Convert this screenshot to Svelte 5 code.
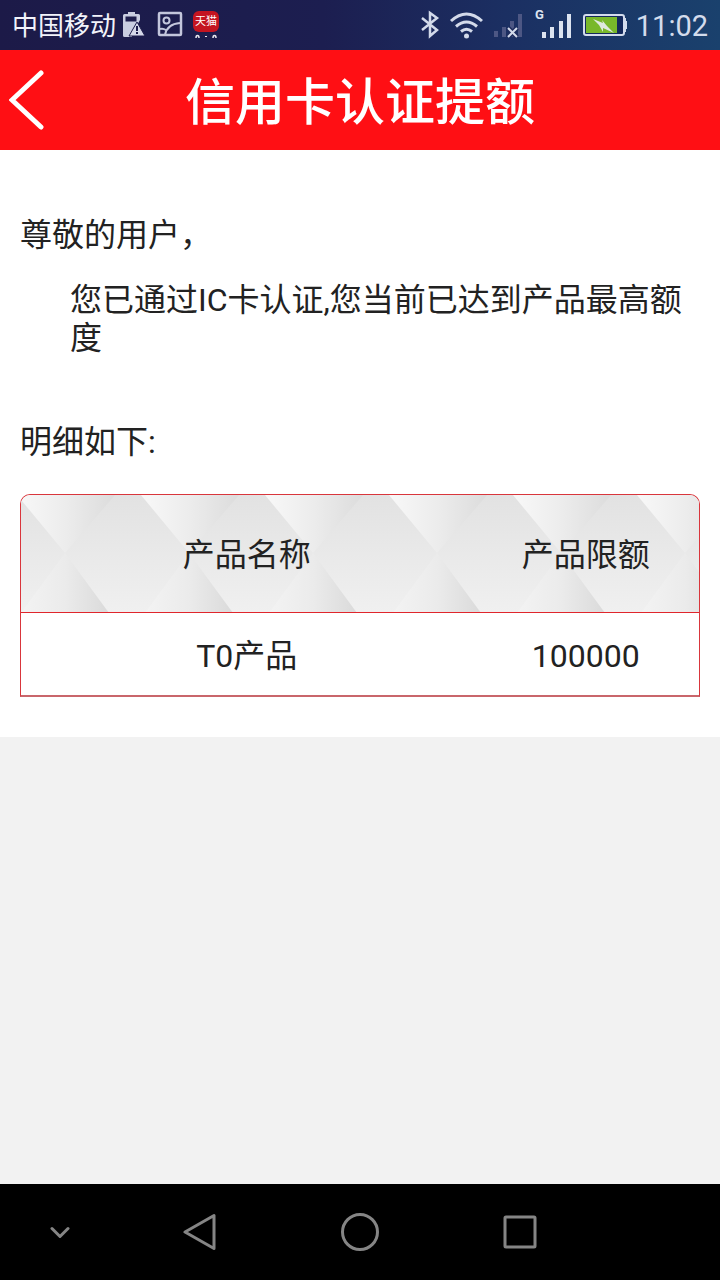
<script>
  let carrier = "中国移动";
  let time = "11:02";

  // Credit products and the limit for each one
  let products = [{ name: "T0产品", limit: "100000" }];

  const goBack = () => {
    history.back();
  };
</script>

<div class="page">
  <!-- Status Bar -->
  <div class="status-bar">
    <div class="status-group left">
      <span class="carrier">{carrier}</span>
      <svg width="24" height="28" viewBox="0 0 24 28">
        <path d="M6 1h7v2h3.500q1.500 0 1.500 1.500V9l-8 14v3H2.500Q1 26 1 24.500v-20Q1 3 2.500 3H6z" fill="#c9cde0" />
        <path d="M3.500 5.500h11v5h-11z" fill="#1e1d4c" />
        <path d="M15 11l8 14H7z" fill="#d5d8e8" stroke="#1e1d4c" stroke-width="1" />
        <path d="M14 15h2v5h-2zM14 21h2v2h-2z" fill="#1e1d4c" />
      </svg>
      <svg width="34" height="28" viewBox="0 0 34 28" fill="none" stroke="#c3c6dc" stroke-width="2">
        <rect x="7" y="2" width="22" height="22" rx="1" stroke-width="2.500" />
        <circle cx="14.500" cy="9.500" r="3" />
        <path d="M8 18q3-1 6 1M13 24q2-11 15-12" />
      </svg>
      <svg width="28" height="28" viewBox="0 0 28 28">
        <rect x="1" y="0" width="26" height="21" rx="6" fill="#c41420" />
        <text x="14" y="14" text-anchor="middle" class="shop">天猫</text>
        <path d="M4 27q0-2.500 1.500-2.500T7 27M21 27q0-2.500 1.500-2.500T24 27" fill="none" stroke="#e8e8ee" stroke-width="1.500" />
        <path d="M13 25h2v1h-2z" fill="#e8e8ee" />
      </svg>
    </div>

    <div class="status-group right">
      <svg width="24" height="30" viewBox="0 0 24 30" fill="none" stroke="#d3daea" stroke-width="2.500">
        <path d="M3 8l15 12-7 6V3l7 5L3 20" />
      </svg>
      <svg width="37" height="30" viewBox="0 0 37 30" fill="none" stroke="#d3daea" stroke-width="3">
        <path d="M2 11q15.500-14 31 0M7 16.500q10.500-9 21 0M12 21.500q5.500-4.500 11 0" />
        <circle cx="17.500" cy="26" r="2.500" fill="#d3daea" stroke="none" />
      </svg>
      <svg width="36" height="30" viewBox="0 0 36 30">
        <path d="M2 21h4v6H2zM10 17h4v10h-4zM18 11h4v16h-4zM26 4h4v23h-4z" fill="#4d5784" />
        <path d="M16 18l9 9M25 18l-9 9" stroke="#1f2c5d" stroke-width="5" />
        <path d="M16 18l9 9M25 18l-9 9" stroke="#d3daea" stroke-width="2" />
      </svg>
      <svg width="42" height="40" viewBox="0 -5 42 40">
        <text x="1" y="9" class="network">G</text>
        <path d="M8 22h4v6H8zM16 17h4v11h-4zM25 11h4v17h-4zM33 4h4v24h-4z" fill="#dce3f0" />
      </svg>
      <svg width="48" height="30" viewBox="0 0 48 30">
        <rect x="2" y="5" width="40" height="20" rx="2" fill="#14295c" stroke="#d3dced" stroke-width="2" />
        <path d="M42 8h2v3h1v8h-1v3h-2" fill="#d3dced" />
        <rect x="4" y="7" width="31" height="16" fill="#78b82a" />
        <path d="M11 9l10 4-1-3 5 6 7 7-11-5v4l-4-7z" fill="#dfe9df" />
      </svg>
      <span class="time">{time}</span>
    </div>
  </div>

  <!-- Title Bar -->
  <header class="header">
    <button class="back" aria-label="返回" on:click={goBack}>
      <svg width="36" height="60" viewBox="0 0 36 60">
        <path d="M32 3L3 30l29 27" fill="none" stroke="#fff" stroke-width="5" stroke-linecap="round" />
      </svg>
    </button>
    <h1>信用卡认证提额</h1>
  </header>

  <!-- Notice and Limits -->
  <main class="content">
    <p class="greeting">尊敬的用户，</p>
    <p class="message">您已通过IC卡认证,您当前已达到产品最高额度</p>
    <p class="detail">明细如下:</p>

    <div class="limits">
      <svg class="facets" width="100%" height="100%" aria-hidden="true">
        <defs>
          <linearGradient id="plain" x1="0" y1="0" x2="0" y2="1">
            <stop offset="0" stop-color="#e2e2e2" />
            <stop offset="1" stop-color="#f0f0f0" />
          </linearGradient>
          <linearGradient id="fold" x1="0" y1="0" x2="1" y2="0">
            <stop offset="0" stop-color="#f8f8f8" />
            <stop offset="0.500" stop-color="#ececec" />
            <stop offset="1" stop-color="#dcdcdc" />
          </linearGradient>
          <linearGradient id="fold-low" x1="0" y1="0" x2="1" y2="0">
            <stop offset="0" stop-color="#f3f3f3" />
            <stop offset="0.500" stop-color="#ebebeb" />
            <stop offset="1" stop-color="#dadada" />
          </linearGradient>
          <pattern id="facet" x="-18" width="124" height="118" patternUnits="userSpaceOnUse">
            <rect width="124" height="118" fill="url(#plain)" />
            <path d="M14 0h98L62 58z" fill="url(#fold)" />
            <path d="M62 58l44 60H18z" fill="url(#fold-low)" />
          </pattern>
        </defs>
        <rect width="100%" height="100%" fill="url(#facet)" />
      </svg>
      <table>
        <thead>
          <tr>
            <th class="name">产品名称</th>
            <th>产品限额</th>
          </tr>
        </thead>
        <tbody>
          {#each products as product}
            <tr>
              <td>{product.name}</td>
              <td>{product.limit}</td>
            </tr>
          {/each}
        </tbody>
      </table>
    </div>
  </main>

  <!-- Navigation Keys -->
  <nav class="keys">
    <button aria-label="隐藏">
      <svg width="20" height="14" viewBox="0 0 20 14"><path d="M2 3.500l8 8 8-8" /></svg>
    </button>
    <button aria-label="后退" on:click={goBack}>
      <svg width="34" height="38" viewBox="0 0 34 38"><path d="M31 2.500v33L2 19z" /></svg>
    </button>
    <button aria-label="主屏幕">
      <svg width="40" height="40" viewBox="0 0 40 40"><circle cx="20" cy="20" r="17.500" /></svg>
    </button>
    <button aria-label="最近任务">
      <svg width="36" height="36" viewBox="0 0 36 36"><rect x="3" y="3" width="30" height="30" rx="1" /></svg>
    </button>
  </nav>
</div>

<style>
  :global(body) {
    margin: 0;
    background: #f2f2f2;
  }

  .page {
    display: flex;
    flex-direction: column;
    min-height: 100vh;
    font-family: Roboto, "Noto Sans CJK SC", sans-serif;
    color: #222;
  }

  svg {
    display: block;
    flex-shrink: 0;
  }

  .status-bar {
    display: flex;
    justify-content: space-between;
    height: 50px;
    padding: 0 12px;
    background: linear-gradient(90deg, #1c1a48 0%, #1c1e50 45%, #1b2f62 70%, #1a416d 100%);
  }

  .status-group {
    display: flex;
    align-items: center;
    gap: 6px;
  }

  .carrier,
  .time {
    padding-top: 3px;
    line-height: 47px;
  }

  .carrier {
    font-size: 26px;
    color: #f2f3fa;
  }

  .shop {
    font-size: 11px;
    fill: #fff;
  }

  .network {
    font-size: 13px;
    font-weight: bold;
    fill: #dce3f0;
  }

  .time {
    font-size: 29px;
    color: #d3dcec;
  }

  .header {
    display: grid;
    grid-template-columns: 60px 1fr 60px;
    align-items: center;
    height: 100px;
    background: #ff0f14;
    color: #fff;
  }

  .header h1 {
    margin: 0;
    padding-top: 6px;
    font-size: 50px;
    line-height: 94px;
    font-weight: 500;
    text-align: center;
  }

  button {
    padding: 0;
    border: none;
    background: none;
    cursor: pointer;
  }

  .back {
    height: 100px;
    padding-left: 9px;
  }

  .content {
    padding: 66px 20px 40px;
    background: #fff;
    font-size: 32px;
    line-height: 38px;
  }

  .content p {
    margin: 0;
  }

  .content .message {
    margin-top: 27px;
    padding-left: 50px;
  }

  .content .detail {
    margin-top: 66px;
  }

  .limits {
    position: relative;
    margin-top: 33px;
    border: 1px solid #d9363c;
    border-bottom: 2px solid #c9666b;
    border-radius: 10px 10px 0 0;
    overflow: hidden;
  }

  /* patterned backdrop under the heading row */
  .facets {
    position: absolute;
    inset: 0;
  }

  table {
    position: relative;
    width: 100%;
    border-collapse: collapse;
    table-layout: fixed;
  }

  th,
  td {
    padding: 2px 0 0;
    font-weight: 400;
    text-align: center;
  }

  th {
    height: 115px;
  }

  .name {
    width: 66.6%;
  }

  td {
    height: 79px;
    padding-top: 3px;
    border-top: 1px solid #e0262c;
    background: #fff;
  }

  .keys {
    display: grid;
    grid-template-columns: 3fr 4fr 4fr 4fr 3fr;
    height: 96px;
    margin-top: auto;
    background: #000;
  }

  .keys button {
    display: flex;
    align-items: center;
    justify-content: center;
  }

  .keys svg {
    fill: none;
    stroke: #858585;
    stroke-width: 3;
    stroke-linecap: round;
    stroke-linejoin: round;
  }
</style>
